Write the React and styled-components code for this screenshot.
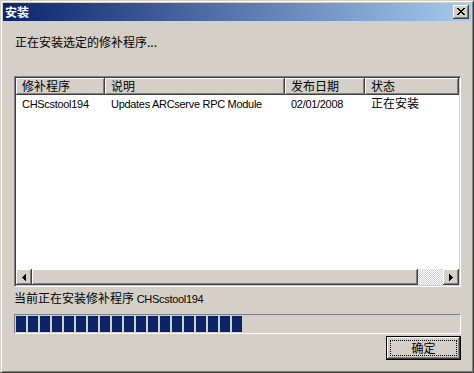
import React from "react";
import styled, { createGlobalStyle } from "styled-components";

const GlobalStyle = createGlobalStyle`
  html, body { margin: 0; padding: 0; background: #d4d0c8; }
  body {
    font-family: "Noto Sans CJK SC", "Liberation Sans", sans-serif;
    font-size: 12px;
    color: #000;
  }
  * { box-sizing: border-box; }
`;

const Window = styled.div`
  width: 474px;
  height: 373px;
  display: flex;
  flex-direction: column;
  background: #d4d0c8;
  border: 1px solid;
  border-color: #d4d0c8 #404040 #404040 #d4d0c8;
  box-shadow: inset 1px 1px #ffffff, inset -1px -1px #808080;
  padding: 2px;
`;

const TitleBar = styled.div`
  height: 18px;
  flex: none;
  display: flex;
  align-items: center;
  justify-content: space-between;
  padding: 0 2px 0 2px;
  background: linear-gradient(to right, #0a246a, #a6caf0);
`;

const Title = styled.span`
  color: #fff;
  font-weight: bold;
  font-size: 12px;
  line-height: 14px;
`;

const raised = `
  background: #d4d0c8;
  box-shadow: inset -1px -1px #404040, inset 1px 1px #ffffff,
    inset -2px -2px #808080, inset 2px 2px #d4d0c8;
`;

const CloseButton = styled.div`
  width: 16px;
  height: 14px;
  display: flex;
  align-items: center;
  justify-content: center;
  padding: 0 0 1px 0;
  ${raised}
  box-shadow: inset -1px -1px #404040, inset 1px 1px #ffffff,
    inset -2px -2px #808080;
`;

const Body = styled.div`
  flex: 1;
  display: flex;
  flex-direction: column;
  padding: 14px 10px 0 11px;
`;

const Label = styled.div`
  line-height: 14px;
  height: 14px;
  padding-left: ${(p) => p.$indent || 0}px;
  margin-top: ${(p) => p.$top || 0}px;
  white-space: nowrap;
`;

const Latin = styled.span`
  font-family: "Liberation Sans", sans-serif;
  font-size: 11px;
  letter-spacing: -0.3px;
`;

const ListBox = styled.div`
  margin-top: 27px;
  height: 211px;
  display: flex;
  flex-direction: column;
  border: 1px solid;
  border-color: #808080 #ffffff #ffffff #808080;
  box-shadow: inset 1px 1px #404040, inset -1px -1px #d4d0c8;
  padding: 1px;
  background: #fff;
`;

const HeaderRow = styled.div`
  height: 17px;
  flex: none;
  display: flex;
  background: #d4d0c8;
`;

const HeaderCell = styled.div`
  ${(p) => (p.$width ? `width: ${p.$width}px; flex: none;` : "flex: 1;")}
  height: 17px;
  padding: 0 0 0 6px;
  line-height: 16px;
  white-space: nowrap;
  overflow: hidden;
  background: #d4d0c8;
  box-shadow: inset -1px -1px #404040, inset 1px 1px #ffffff,
    inset -2px -2px #808080;
`;

const Rows = styled.div`
  flex: 1;
  background: #fff;
`;

const Row = styled.div`
  height: 16px;
  display: flex;
`;

const Cell = styled.div`
  ${(p) => (p.$width ? `width: ${p.$width}px; flex: none;` : "flex: 1;")}
  padding-left: 6px;
  line-height: 16px;
  white-space: nowrap;
  overflow: hidden;
`;

const ScrollBar = styled.div`
  height: 16px;
  flex: none;
  display: flex;
`;

const ArrowButton = styled.div`
  width: 16px;
  height: 16px;
  flex: none;
  display: flex;
  align-items: center;
  justify-content: center;
  ${raised}
`;

const Track = styled.div`
  flex: 1;
  display: flex;
  background: repeating-conic-gradient(#ffffff 0 25%, #d4d0c8 0 50%) 0 0 / 2px 2px;
`;

const Thumb = styled.div`
  width: ${(p) => p.$width}px;
  height: 16px;
  ${raised}
`;

const Progress = styled.div`
  margin-top: 9px;
  height: 20px;
  display: flex;
  gap: 2px;
  padding: 1px;
  border: 1px solid;
  border-color: #808080 #ffffff #ffffff #808080;
`;

const Block = styled.div`
  width: 10px;
  height: 16px;
  background: #0a246a;
`;

const ButtonRow = styled.div`
  margin-top: 2px;
  display: flex;
  justify-content: flex-end;
`;

const Button = styled.div`
  width: 75px;
  height: 24px;
  border: 1px solid #000;
  background: #d4d0c8;
  box-shadow: inset -1px -1px #404040, inset 1px 1px #ffffff,
    inset -2px -2px #808080;
  padding: 3px;
  display: flex;
`;

const Focus = styled.div`
  flex: 1;
  border: 1px dotted #000;
  display: flex;
  align-items: center;
  justify-content: center;
  line-height: 14px;
`;

const CloseIcon = () => (
  <svg width="8" height="7" viewBox="0 0 8 7" shapeRendering="crispEdges">
    <path
      fill="#000"
      d="M0 0h2v1h-2z M6 0h2v1h-2z M1 1h2v1h-2z M5 1h2v1h-2z M2 2h4v1h-4z M3 3h2v1h-2z M2 4h4v1h-4z M1 5h2v1h-2z M5 5h2v1h-2z M0 6h2v1h-2z M6 6h2v1h-2z"
    />
  </svg>
);

const LeftArrow = () => (
  <svg width="4" height="7" viewBox="0 0 4 7" shapeRendering="crispEdges">
    <path fill="#000" d="M3 0h1v7h-1z M2 1h1v5h-1z M1 2h1v3h-1z M0 3h1v1h-1z" />
  </svg>
);

const RightArrow = () => (
  <svg width="4" height="7" viewBox="0 0 4 7" shapeRendering="crispEdges">
    <path fill="#000" d="M0 0h1v7h-1z M1 1h1v5h-1z M2 2h1v3h-1z M3 3h1v1h-1z" />
  </svg>
);

const columns = [
  { title: "修补程序", width: 89 },
  { title: "说明", width: 180 },
  { title: "发布日期", width: 80 },
  { title: "状态" },
];

const patches = [
  {
    name: "CHScstool194",
    desc: "Updates ARCserve RPC Module",
    date: "02/01/2008",
    status: "正在安装",
  },
];

export default function App() {
  return (
    <>
      <GlobalStyle />
      <Window>
        <TitleBar>
          <Title>安装</Title>
          <CloseButton>
            <CloseIcon />
          </CloseButton>
        </TitleBar>
        <Body>
          <Label $indent={1}>正在安装选定的修补程序...</Label>
          <ListBox>
            <HeaderRow>
              {columns.map((c) => (
                <HeaderCell key={c.title} $width={c.width}>
                  {c.title}
                </HeaderCell>
              ))}
            </HeaderRow>
            <Rows>
              {patches.map((p) => (
                <Row key={p.name}>
                  <Cell $width={columns[0].width}>
                    <Latin>{p.name}</Latin>
                  </Cell>
                  <Cell $width={columns[1].width}>
                    <Latin>{p.desc}</Latin>
                  </Cell>
                  <Cell $width={columns[2].width}>
                    <Latin>{p.date}</Latin>
                  </Cell>
                  <Cell>{p.status}</Cell>
                </Row>
              ))}
            </Rows>
            <ScrollBar>
              <ArrowButton>
                <LeftArrow />
              </ArrowButton>
              <Track>
                <Thumb $width={386} />
              </Track>
              <ArrowButton>
                <RightArrow />
              </ArrowButton>
            </ScrollBar>
          </ListBox>
          <Label $top={4}>
            当前正在安装修补程序 <Latin>CHScstool194</Latin>
          </Label>
          <Progress>
            {Array.from({ length: 19 }).map((_, i) => (
              <Block key={i} />
            ))}
          </Progress>
          <ButtonRow>
            <Button>
              <Focus>确定</Focus>
            </Button>
          </ButtonRow>
        </Body>
      </Window>
    </>
  );
}
